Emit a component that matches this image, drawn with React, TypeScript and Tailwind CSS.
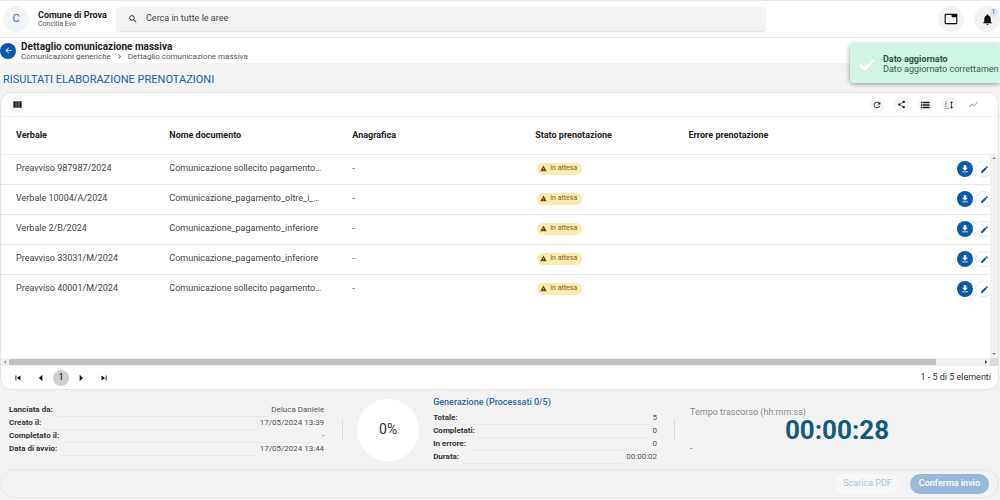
import type { ReactNode } from 'react';
import {
  MdSearch, MdTab, MdNotifications, MdArrowBack, MdChevronRight, MdViewColumn, MdRefresh, MdShare,
  MdShowChart, MdWarning, MdDownload, MdEdit, MdSkipPrevious, MdSkipNext,
  MdArrowLeft, MdArrowRight,
} from 'react-icons/md';

type Booking = { verbale: string; documento: string };

const bookings: Booking[] = [
  { verbale: 'Preavviso 987987/2024', documento: 'Comunicazione sollecito pagamento…' },
  { verbale: 'Verbale 10004/A/2024', documento: 'Comunicazione_pagamento_oltre_i_…' },
  { verbale: 'Verbale 2/B/2024', documento: 'Comunicazione_pagamento_inferiore' },
  { verbale: 'Preavviso 33031/M/2024', documento: 'Comunicazione_pagamento_inferiore' },
  { verbale: 'Preavviso 40001/M/2024', documento: 'Comunicazione sollecito pagamento…' },
];

const launchInfo: [string, string][] = [
  ['Lanciata da:', 'Deluca Daniele'],
  ['Creato il:', '17/05/2024 13:39'],
  ['Completato il:', '-'],
  ['Data di avvio:', '17/05/2024 13:44'],
];

const generationInfo: [string, string][] = [
  ['Totale:', '5'],
  ['Completati:', '0'],
  ['In errore:', '0'],
  ['Durata:', '00:00:02'],
];

function SortIcon() {
  return (
    <svg viewBox="0 0 24 24" className="size-[10px]" fill="none" stroke="#888" strokeWidth="2">
      <path d="M1 20h11M2 15h6M2 10h5M4 3v7" />
      <path d="M18 5v14" stroke="#333" />
      <path d="M14 7l4-4 4 4zM14 17l4 4 4-4z" fill="#333" stroke="none" />
    </svg>
  );
}

function RowsIcon() {
  return (
    <svg viewBox="0 0 24 24" className="size-[10px]" fill="#1c1c1c">
      <path d="M2 4h3v4H2zM6 4h17v4H6zM2 10h3v4H2zM6 10h17v4H6zM2 16h3v4H2zM6 16h17v4H6z" />
    </svg>
  );
}

function ToolButton({ label, children }: { label: string; children: ReactNode }) {
  return (
    <button aria-label={label} className="flex size-4 items-center justify-center rounded-full bg-[#f5f5f5] text-[#222]">
      {children}
    </button>
  );
}

function InfoList({ items }: { items: [string, string][] }) {
  return (
    <dl>
      {items.map(([label, value]) => (
        <div key={label} className="flex h-[13px] items-center gap-1 text-[8px] leading-3">
          <dt className="font-bold text-[#333]">{label}</dt>
          <span className="h-px flex-1 self-end bg-[#e9e9e9]" />
          <dd className="text-[#555]">{value}</dd>
        </div>
      ))}
    </dl>
  );
}

function Header() {
  return (
    <header className="flex h-[38px] shrink-0 items-center border-t border-b border-[#e8e8e8] bg-white pl-[3px]">
      <div className="flex size-[26px] shrink-0 items-center justify-center rounded-full bg-[#f3f4f5] text-[11px] text-[#3573ae]">C</div>
      <div className="ml-[9px] w-[78px] shrink-0 whitespace-nowrap">
        <div className="text-[9px] leading-[10px] font-bold text-[#222]">Comune di Prova</div>
        <div className="text-[7px] leading-[9px] text-[#555]">Concilia Evo</div>
      </div>
      <label className="flex h-[25px] w-[65.2%] items-center rounded-sm border-b border-[#e4e4e4] bg-[#f3f3f3] pl-3">
        <MdSearch className="size-[10px] text-[#333]" />
        <input aria-label="Cerca" placeholder="Cerca in tutte le aree" className="ml-2 flex-1 bg-transparent text-[9px] text-[#333] outline-none placeholder:text-[#444]" />
      </label>
      <div className="ml-auto flex shrink-0 gap-[10px]">
        <button aria-label="Finestre" className="flex size-[26px] items-center justify-center rounded-full bg-[#f3f3f3] text-[#111]">
          <MdTab className="size-[14px]" />
        </button>
        <button aria-label="Notifiche" className="relative flex size-[26px] items-center justify-center rounded-full bg-[#f3f3f3] text-[#111]">
          <MdNotifications className="size-[13px]" />
          <span className="absolute top-[2px] right-[2px] flex size-[9px] items-center justify-center rounded-full bg-[#d6ebfb] text-[7px] leading-none text-[#2a6fad]">1</span>
        </button>
      </div>
    </header>
  );
}

function Toast() {
  return (
    <div role="status" className="absolute top-[44px] right-0 flex h-[39px] w-[150px] items-center rounded-l-sm bg-[#d1f5e4] pl-2 shadow-[0_1px_5px_rgba(0,0,0,0.4)]">
      <svg viewBox="0 0 18 18" className="size-[18px] shrink-0" fill="none" stroke="#fff" strokeWidth="3">
        <path d="M2 9.500 6.500 14 16 4.500" />
      </svg>
      <div className="ml-[7px] text-[9px] leading-[10px] whitespace-nowrap text-[#2c6a50]">
        <div className="font-bold text-[#1d5a40]">Dato aggiornato</div>
        <div>Dato aggiornato correttamen</div>
      </div>
    </div>
  );
}

function BookingTable() {
  return (
    <table className="w-full table-fixed text-left text-[9px] text-[#444]">
      <colgroup>
        <col className="w-[15.5%]" />
        <col className="w-[18.5%]" />
        <col className="w-[18.5%]" />
        <col className="w-[15.5%]" />
        <col />
        <col className="w-[33px]" />
      </colgroup>
      <thead>
        <tr className="h-[37px] border-b border-[#eaeaea] text-[#222]">
          <th className="pl-[15px] font-bold">Verbale</th>
          <th className="pl-[15px] font-bold">Nome documento</th>
          <th className="pl-[15px] font-bold">Anagrafica</th>
          <th className="pl-[15px] font-bold">Stato prenotazione</th>
          <th className="pl-[15px] font-bold">Errore prenotazione</th>
          <th aria-label="Azioni" />
        </tr>
      </thead>
      <tbody>
        {bookings.map((b) => (
          <tr key={b.verbale} className="h-[30px] border-b border-[#e8e8e8] last:border-transparent">
            <td className="truncate pl-[15px]">{b.verbale}</td>
            <td className="truncate pl-[15px]">{b.documento}</td>
            <td className="pl-[15px]">-</td>
            <td className="pl-[17px]">
              <span className="inline-flex h-3 items-center gap-[3px] rounded-full bg-[#fcebae] px-[3px] pr-[5px] align-middle text-[7px] leading-none text-[#7a6320]">
                <MdWarning className="size-[7px] text-[#5f4b0c]" />
                In attesa
              </span>
            </td>
            <td />
            <td className="overflow-hidden">
              <div className="flex gap-[2px]">
                <button aria-label="Scarica" className="flex size-4 shrink-0 items-center justify-center rounded-full bg-[#0a59a8] text-white">
                  <MdDownload className="size-[10px]" />
                </button>
                <button aria-label="Modifica" className="flex h-4 w-[18px] shrink-0 items-center justify-center rounded-full border border-[#ececec] bg-white text-[#1d4f86]">
                  <MdEdit className="size-[9px]" />
                </button>
              </div>
            </td>
          </tr>
        ))}
      </tbody>
    </table>
  );
}

function ResultsCard() {
  return (
    <section className="mr-px flex min-h-0 flex-1 flex-col overflow-hidden rounded-xl border border-[#e6e6e6] bg-white">
      <div className="flex h-[24px] shrink-0 items-center border-b border-[#f3f3f3] pr-[17px] pl-2">
        <ToolButton label="Colonne"><MdViewColumn className="size-[11px]" /></ToolButton>
        <div className="ml-auto flex gap-2">
          <ToolButton label="Aggiorna"><MdRefresh className="size-[10px]" /></ToolButton>
          <ToolButton label="Condividi"><MdShare className="size-[9px]" /></ToolButton>
          <ToolButton label="Elenco"><RowsIcon /></ToolButton>
          <ToolButton label="Ordina"><SortIcon /></ToolButton>
          <button aria-label="Grafico" className="flex size-4 items-center justify-center text-[#aaa]">
            <MdShowChart className="size-[11px]" />
          </button>
        </div>
      </div>
      <div className="flex min-h-0 flex-1">
        <div className="min-w-0 flex-1"><BookingTable /></div>
        <div className="flex w-2 shrink-0 flex-col pt-[37px]">
          <div className="flex flex-1 flex-col items-center justify-between bg-[#f1f1f1] py-[3px]">
            <svg viewBox="0 0 4 2" className="w-1"><path d="M0 2 2 0l2 2z" fill="#888" /></svg>
            <svg viewBox="0 0 4 2" className="w-1"><path d="M0 0h4L2 2z" fill="#888" /></svg>
          </div>
        </div>
      </div>
      <div className="flex h-2 shrink-0 items-center bg-[#f1f1f1]">
        <svg viewBox="0 0 2 4" className="mx-[3px] h-1 w-[2px]"><path d="M2 0v4L0 2z" fill="#999" /></svg>
        <div className="h-[6px] w-[93%] bg-[#c1c1c1]" />
        <svg viewBox="0 0 2 4" className="mr-[3px] ml-auto h-1 w-[2px]"><path d="M0 0v4l2-2z" fill="#333" /></svg>
        <div className="h-2 w-2 bg-[#dcdcdc]" />
      </div>
      <div className="flex h-[23px] shrink-0 items-center pr-[7px] pl-3 text-[9px] text-[#333]">
        <nav aria-label="Paginazione" className="flex items-center gap-[10px] text-[#111]">
          <button aria-label="Prima pagina"><MdSkipPrevious className="size-[10px]" /></button>
          <div className="flex items-center gap-1">
            <button aria-label="Pagina precedente"><MdArrowLeft className="size-4" /></button>
            <button aria-current="page" className="flex size-4 items-center justify-center rounded-full bg-[#cfcfcf] text-[9px]">1</button>
            <button aria-label="Pagina successiva"><MdArrowRight className="size-4" /></button>
          </div>
          <button aria-label="Ultima pagina"><MdSkipNext className="size-[10px]" /></button>
        </nav>
        <span className="ml-auto">1 - 5 di 5 elementi</span>
      </div>
    </section>
  );
}

function Summary() {
  return (
    <section className="flex h-[79px] shrink-0 items-center pl-[9px]">
      <div className="w-[31.8%]"><InfoList items={launchInfo} /></div>
      <div className="ml-[18px] h-[22px] w-px bg-[#dcdcdc]" />
      <div className="ml-[14px] flex size-[62px] shrink-0 items-center justify-center rounded-full bg-white text-[14px] text-[#333]">0%</div>
      <div className="ml-[14px] w-[22.6%]">
        <h2 className="mb-1 text-[9px] leading-3 font-medium text-[#2f68a3]">Generazione (Processati 0/5)</h2>
        <InfoList items={generationInfo} />
      </div>
      <div className="ml-[17px] h-[22px] w-px bg-[#dcdcdc]" />
      <div className="ml-[15px] flex-1">
        <div className="text-[9px] leading-3 text-[#888]">Tempo trascorso (hh:mm:ss)</div>
        <div className="pr-4 text-center text-[26px] leading-6 font-bold text-[#155b78]">00:00:28</div>
        <div className="text-[9px] leading-3 text-[#777]">-</div>
      </div>
    </section>
  );
}

export default function App() {
  return (
    <div className="relative flex h-screen min-h-[440px] flex-col overflow-hidden bg-[#f3f3f3] font-['Roboto',sans-serif]">
      <Header />
      <div className="flex h-[25px] shrink-0 items-center bg-white">
        <button aria-label="Indietro" className="flex size-4 items-center justify-center rounded-full bg-[#0a59a8] text-white">
          <MdArrowBack className="size-[9px]" />
        </button>
        <div className="ml-[5px] pt-px">
          <h1 className="text-[10px] leading-[11px] font-bold text-[#222]">Dettaglio comunicazione massiva</h1>
          <nav aria-label="Percorso" className="flex items-center gap-1 text-[8px] leading-[9px] text-[#555]">
            <a href="#generiche">Comunicazioni generiche</a>
            <MdChevronRight className="size-[9px]" />
            <span>Dettaglio comunicazione massiva</span>
          </nav>
        </div>
      </div>
      <h2 className="flex h-[29px] shrink-0 items-center pt-[6px] pl-[3px] text-[11px] font-normal text-[#2060a8]">RISULTATI ELABORAZIONE PRENOTAZIONI</h2>
      <ResultsCard />
      <Summary />
      <footer className="mr-px mb-[2px] flex h-[29px] shrink-0 items-center justify-end gap-[10px] rounded-full border border-[#e6e6e6] pr-[9px] text-[9px]">
        <button className="h-5 rounded-full bg-[#f8f8f8] px-2 text-[#a9c4de]">Scarica PDF</button>
        <button className="h-5 rounded-full bg-[#98b9d9] px-[9px] font-medium text-white">Conferma invio</button>
      </footer>
      <Toast />
    </div>
  );
}
